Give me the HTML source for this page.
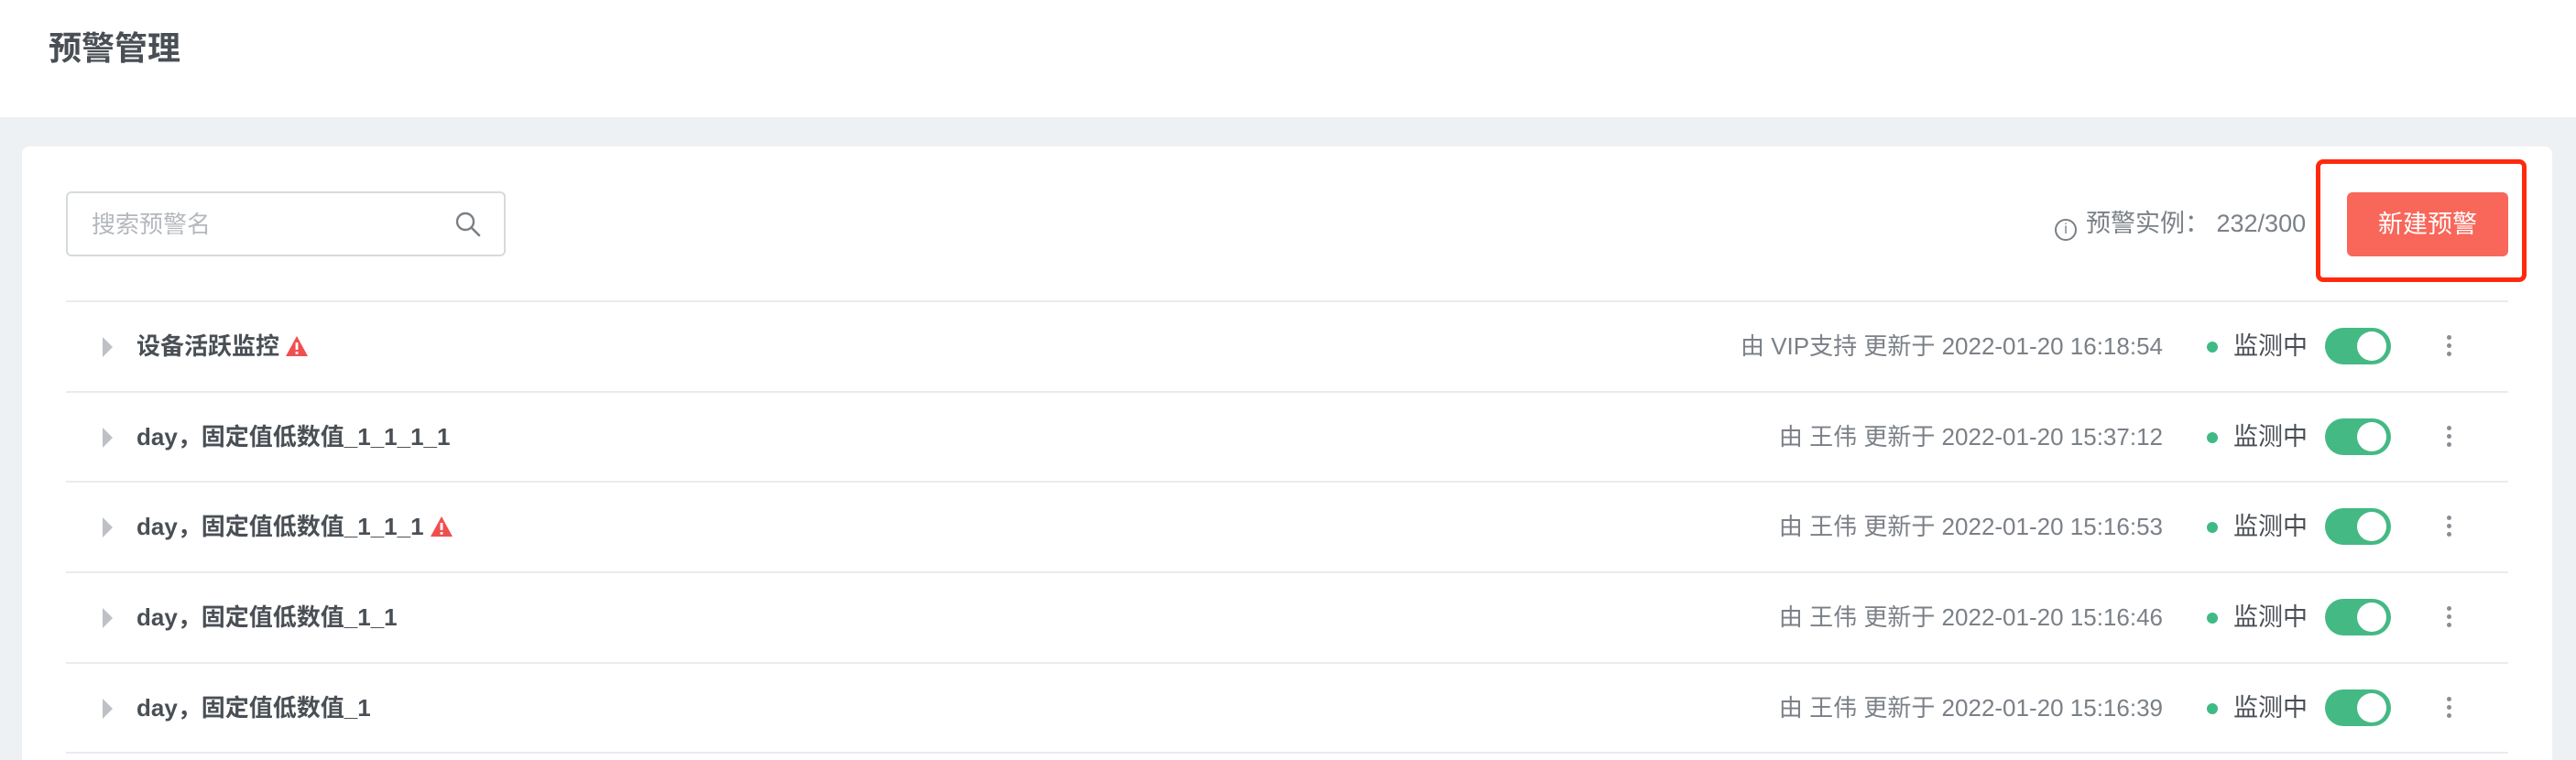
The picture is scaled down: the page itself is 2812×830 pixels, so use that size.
<!DOCTYPE html>
<html><head><meta charset="utf-8"><style>
*{margin:0;padding:0;box-sizing:border-box}
html,body{width:2812px;height:830px;overflow:hidden}
body{background:#eef1f4;font-family:"Liberation Sans","Noto Sans CJK SC",sans-serif;position:relative}
.top{position:absolute;left:0;top:0;width:2812px;height:128px;background:#fff}
.top h1{position:absolute;left:53px;top:31px;font-size:36px;font-weight:bold;color:#4a4f55;line-height:44px}
.card{position:absolute;left:24px;top:160px;width:2762px;height:670px;background:#fff;border-radius:8px 8px 0 0}
.search{position:absolute;left:72px;top:209px;width:480px;height:71px;border:2px solid #d7dadd;border-radius:6px}
.search span{position:absolute;left:26px;top:18px;font-size:26px;color:#b4b8bd;line-height:32px}
.search svg{position:absolute;right:24px;top:19px}
.inst{position:absolute;left:2243px;top:227px;font-size:27px;color:#7b8087;line-height:34px;white-space:nowrap}
.inst i{display:inline-block;width:24px;height:24px;border:2px solid #7b8087;border-radius:50%;font-style:normal;font-size:16px;text-align:center;line-height:20px;vertical-align:-2px;margin-right:10px}
.redbox{position:absolute;left:2528px;top:174px;width:230px;height:134px;border:5px solid #ff2a0e;border-radius:8px;background:#fff}
.btn{position:absolute;left:2562px;top:210px;width:176px;height:70px;background:#f8675a;border-radius:6px;color:#fff;font-size:27px;text-align:center;line-height:70px}
.row{position:absolute;left:72px;width:2666px;height:99px;border-top:2px solid #e9ecee}
.tri{position:absolute;left:40px;top:38px;width:0;height:0;border-left:11px solid #bdc1c5;border-top:11px solid transparent;border-bottom:11px solid transparent}
.name{position:absolute;left:77px;top:30px;font-size:26px;font-weight:bold;color:#4a4f55;line-height:36px;white-space:nowrap}
.name svg{vertical-align:-3px;margin-left:6px}
.meta{position:absolute;right:377px;top:30px;font-size:26px;color:#7b8087;line-height:36px;white-space:nowrap}
.dot{position:absolute;left:2337px;top:43px;width:12px;height:12px;border-radius:50%;background:#3fba84}
.st{position:absolute;left:2366px;top:30px;font-size:27px;color:#4a4f55;line-height:36px}
.tog{position:absolute;left:2466px;top:28px;width:72px;height:40px;border-radius:20px;background:#44b984}
.tog::after{content:"";position:absolute;right:5px;top:4px;width:32px;height:32px;border-radius:50%;background:#fff}
.more{position:absolute;left:2599px;top:36px;width:6px}
.more b{display:block;width:5px;height:5px;border-radius:50%;background:#8a8e94;margin-bottom:4px}
</style></head><body>
<div class="top"><h1>预警管理</h1></div>
<div class="card"></div>
<div class="search"><span>搜索预警名</span><svg width="30" height="30" viewBox="0 0 30 30"><circle cx="12" cy="12" r="9" fill="none" stroke="#7b8087" stroke-width="2.4"/><path d="M19 19 L27 27" stroke="#7b8087" stroke-width="2.6" stroke-linecap="round"/></svg></div>
<div class="inst"><i>i</i>预警实例：&nbsp;232/300</div>
<div class="redbox"></div>
<div class="btn">新建预警</div>

<div class="row" style="top:328px"><div class="tri"></div><div class="name">设备活跃监控<svg width="26" height="24" viewBox="0 0 26 24"><path d="M13 1 L25 23 L1 23 Z" fill="#f04f4f"/><rect x="11.6" y="8" width="2.8" height="8" fill="#fff"/><rect x="11.6" y="18" width="2.8" height="2.8" fill="#fff"/></svg></div><div class="meta">由 VIP支持 更新于 2022-01-20 16:18:54</div><div class="dot"></div><div class="st">监测中</div><div class="tog"></div><div class="more"><b></b><b></b><b></b></div></div>
<div class="row" style="top:427px"><div class="tri"></div><div class="name">day，固定值低数值_1_1_1_1</div><div class="meta">由 王伟 更新于 2022-01-20 15:37:12</div><div class="dot"></div><div class="st">监测中</div><div class="tog"></div><div class="more"><b></b><b></b><b></b></div></div>
<div class="row" style="top:525px"><div class="tri"></div><div class="name">day，固定值低数值_1_1_1<svg width="26" height="24" viewBox="0 0 26 24"><path d="M13 1 L25 23 L1 23 Z" fill="#f04f4f"/><rect x="11.6" y="8" width="2.8" height="8" fill="#fff"/><rect x="11.6" y="18" width="2.8" height="2.8" fill="#fff"/></svg></div><div class="meta">由 王伟 更新于 2022-01-20 15:16:53</div><div class="dot"></div><div class="st">监测中</div><div class="tog"></div><div class="more"><b></b><b></b><b></b></div></div>
<div class="row" style="top:624px"><div class="tri"></div><div class="name">day，固定值低数值_1_1</div><div class="meta">由 王伟 更新于 2022-01-20 15:16:46</div><div class="dot"></div><div class="st">监测中</div><div class="tog"></div><div class="more"><b></b><b></b><b></b></div></div>
<div class="row" style="top:723px"><div class="tri"></div><div class="name">day，固定值低数值_1</div><div class="meta">由 王伟 更新于 2022-01-20 15:16:39</div><div class="dot"></div><div class="st">监测中</div><div class="tog"></div><div class="more"><b></b><b></b><b></b></div></div>
<div class="row" style="top:821px;height:9px"></div>
</body></html>
